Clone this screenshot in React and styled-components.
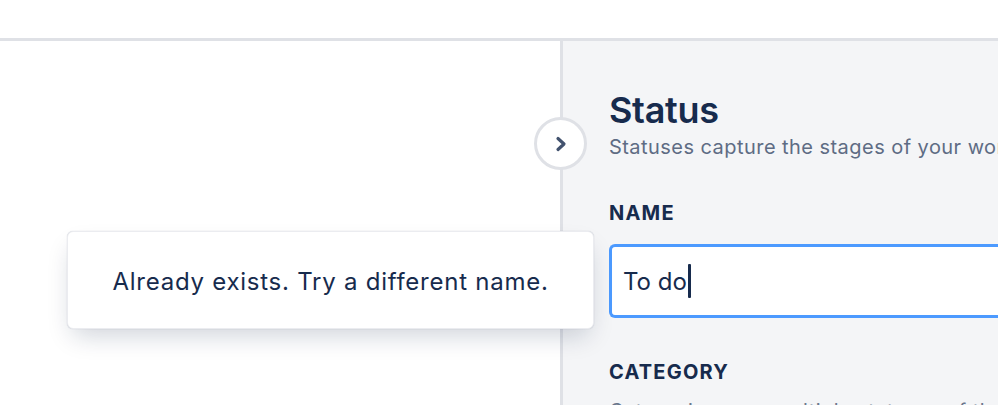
import React from "react";
import styled, { createGlobalStyle } from "styled-components";

const Global = createGlobalStyle`
  html, body { margin: 0; padding: 0; background: #ffffff; }
  body { font-family: Inter, "Noto Sans", sans-serif; color: #172b4d; -webkit-font-smoothing: antialiased; }
  #root { width: 998px; height: 405px; overflow: hidden; }
`;

const Page = styled.div`
  position: relative;
  width: 998px;
  height: 405px;
  overflow: hidden;
  display: flex;
  flex-direction: column;
  background: #ffffff;
`;

const TopBar = styled.header`
  height: 38px;
  flex: none;
  background: #ffffff;
  border-bottom: 3px solid #dfe1e6;
`;

const Body = styled.div`
  position: relative;
  flex: 1;
  display: flex;
  min-height: 0;
`;

const LeftPane = styled.section`
  width: 560px;
  flex: none;
  background: #ffffff;
`;

const RightPane = styled.aside`
  flex: 1;
  min-width: 0;
  border-left: 3px solid #dfe1e6;
  background: #f4f5f7;
  padding: 47px 0 0 46px;
  overflow: hidden;
`;

const Title = styled.h1`
  margin: 0;
  font-size: 36px;
  line-height: 44px;
  font-weight: 600;
  color: #172b4d;
  letter-spacing: -0.3px;
`;

const Subtitle = styled.p`
  margin: 3px 0 0;
  font-size: 20px;
  line-height: 24px;
  color: #5e6c84;
  white-space: nowrap;
  letter-spacing: 0.45px;
`;

const Label = styled.h2`
  margin: ${(p) => p.$top}px 0 0;
  font-size: 20px;
  line-height: 24px;
  font-weight: 700;
  color: #172b4d;
  letter-spacing: 1.2px;
`;

const Field = styled.div`
  margin-top: 19px;
  height: 74px;
  box-sizing: border-box;
  width: 420px;
  border: 3px solid #4c9aff;
  border-right: none;
  border-radius: 6px 0 0 6px;
  background: #ffffff;
  display: flex;
  align-items: center;
  padding-left: 11px;
  font-size: 24px;
  color: #172b4d;
`;

const Caret = styled.span`
  display: inline-block;
  width: 3px;
  height: 34px;
  margin-left: 1px;
  background: #172b4d;
  border-radius: 1px;
`;

const Hint = styled.p`
  margin: 15px 0 0;
  font-size: 20px;
  line-height: 24px;
  color: #6b778c;
  white-space: nowrap;
  letter-spacing: 0.45px;
`;

const ToggleButton = styled.button`
  position: absolute;
  left: 534px;
  top: 76px;
  width: 53px;
  height: 53px;
  box-sizing: border-box;
  border-radius: 50%;
  border: 3px solid #dfe1e6;
  background: #ffffff;
  padding: 0;
  display: flex;
  align-items: center;
  justify-content: center;
`;

const Popup = styled.div`
  position: absolute;
  left: 67px;
  top: 231px;
  width: 527px;
  height: 98px;
  box-sizing: border-box;
  background: #ffffff;
  border: 1px solid #ebecf0;
  border-radius: 6px;
  box-shadow: 0 12px 24px -6px rgba(9, 30, 66, 0.2), 0 0 1px rgba(9, 30, 66, 0.25);
  display: flex;
  align-items: center;
  justify-content: center;
  font-size: 24px;
  letter-spacing: 0.75px;
  color: #172b4d;
  padding-top: 2px;
`;

export default function App() {
  return (
    <Page>
      <Global />
      <TopBar />
      <Body>
        <LeftPane />
        <RightPane>
          <Title>Status</Title>
          <Subtitle>Statuses capture the stages of your work as it moves from start to finish.</Subtitle>
          <Label $top={42}>NAME</Label>
          <Field>
            To do<Caret />
          </Field>
          <Label $top={42}>CATEGORY</Label>
          <Hint>Categorize your multiple statuses of the same kind.</Hint>
        </RightPane>
        <ToggleButton aria-label="Expand">
          <svg width="14" height="16" viewBox="0 0 14 16">
            <polyline points="4,2.5 10,8 4,13.5" fill="none" stroke="#42526e" strokeWidth="3.2" strokeLinecap="round" strokeLinejoin="round" />
          </svg>
        </ToggleButton>
      </Body>
      <Popup>Already exists. Try a different name.</Popup>
    </Page>
  );
}
